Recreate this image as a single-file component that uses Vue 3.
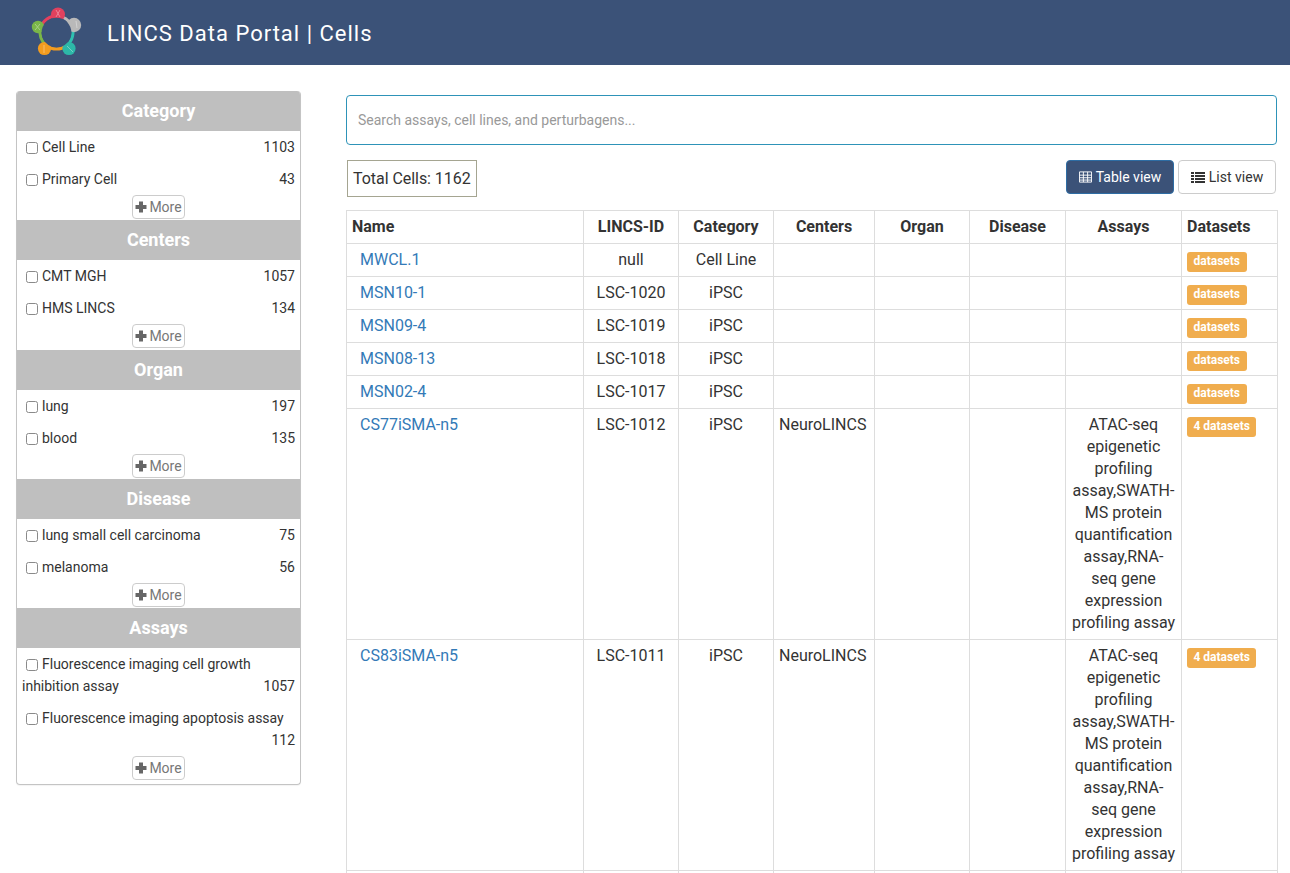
<template>
  <div class="page">
    <header class="topbar">
      <svg class="logo" viewBox="0 0 60 60" width="60" height="60">
        <g fill="none" stroke-width="3">
          <path d="M30.6 13 A16.5 16.5 0 0 1 44.3 22.3" stroke="#b9b9b9" />
          <path d="M44.3 22.3 A16.5 16.5 0 0 1 39.4 42.7" stroke="#2fbfb0" />
          <path d="M39.4 42.7 A16.5 16.5 0 0 1 19.6 42.7" stroke="#f39c1f" />
          <path d="M19.6 42.7 A16.5 16.5 0 0 1 13.6 25" stroke="#7ab648" />
          <path d="M13.6 25 A16.5 16.5 0 0 1 30.6 13" stroke="#e5405e" />
        </g>
        <circle cx="31" cy="11.5" r="7" fill="#e0415e" />
        <circle cx="47" cy="22" r="7.2" fill="#b9b9b9" />
        <circle cx="42" cy="45.5" r="6.6" fill="#2db8a8" />
        <circle cx="17.5" cy="45.5" r="6.6" fill="#f39c1f" />
        <circle cx="11" cy="24" r="6.2" fill="#7ab648" />
        <circle cx="29.5" cy="29.5" r="14.8" fill="#3b5278" />
        <g stroke="#fff" stroke-width="1" opacity="0.35" fill="none">
          <path d="M29 7 L33 14 M33 7 L29 14" />
          <path d="M49 18 L50 25" />
          <path d="M40 43 L46 49" />
          <path d="M17 42 V50" />
          <path d="M8 21 L13 27 M13 21 L8 27" />
        </g>
      </svg>
      <h1 class="title">LINCS Data Portal | Cells</h1>
    </header>

    <div class="content">
      <aside class="sidebar">
        <section v-for="facet in facets" :key="facet.name" class="facet">
          <h2 class="facet-title">{{ facet.name }}</h2>
          <div class="facet-body">
            <div v-for="item in facet.items" :key="item.label" class="facet-item">
              <span class="check"></span>{{ item.label }}
              <span class="count">{{ item.count }}</span>
            </div>
            <div class="more-wrap">
              <button class="more">
                <svg viewBox="0 0 12 12" width="12" height="12"><path d="M4 0.5h4V4h3.5v4H8v3.5H4V8H0.5V4H4z" fill="#666" /></svg>More
              </button>
            </div>
          </div>
        </section>
      </aside>

      <main class="main">
        <input class="search" placeholder="Search assays, cell lines, and perturbagens..." />
        <div class="toolbar">
          <div class="total">Total Cells: 1162</div>
          <div class="views">
            <button class="view active">
              <svg viewBox="0 0 14 12" width="13" height="12"><path d="M0.5 0.5h13v11h-13zM0.5 4h13M0.5 6.8h13M0.5 9.3h13M4.7 0.5v11M9.3 0.5v11" fill="none" stroke="currentColor" /></svg>
              Table view
            </button>
            <button class="view list">
              <svg viewBox="0 0 14 12" width="14" height="12"><path d="M0 1h3v2H0zM4 1h10v2H4zM0 4h3v2H0zM4 4h10v2H4zM0 7h3v2H0zM4 7h10v2H4zM0 10h3v2H0zM4 10h10v2H4z" fill="currentColor" /></svg>
              List view
            </button>
          </div>
        </div>

        <table class="cells">
          <colgroup>
            <col v-for="w in colWidths" :key="w.id" :style="{ width: w.px + 'px' }" />
          </colgroup>
          <thead>
            <tr>
              <th class="left">Name</th>
              <th>LINCS-ID</th>
              <th>Category</th>
              <th>Centers</th>
              <th>Organ</th>
              <th>Disease</th>
              <th>Assays</th>
              <th class="left">Datasets</th>
            </tr>
          </thead>
          <tbody>
            <tr v-for="row in rows" :key="row.name">
              <td class="name"><a href="#">{{ row.name }}</a></td>
              <td>{{ row.id }}</td>
              <td>{{ row.category }}</td>
              <td class="left">{{ row.centers }}</td>
              <td></td>
              <td></td>
              <td>{{ row.assays }}</td>
              <td class="left"><span class="badge">{{ row.datasets }}</span></td>
            </tr>
            <tr class="filler">
              <td v-for="w in colWidths" :key="w.id"></td>
            </tr>
          </tbody>
        </table>
      </main>
    </div>
  </div>
</template>

<script setup>
const facets = [
  { name: 'Category', items: [{ label: 'Cell Line', count: 1103 }, { label: 'Primary Cell', count: 43 }] },
  { name: 'Centers', items: [{ label: 'CMT MGH', count: 1057 }, { label: 'HMS LINCS', count: 134 }] },
  { name: 'Organ', items: [{ label: 'lung', count: 197 }, { label: 'blood', count: 135 }] },
  { name: 'Disease', items: [{ label: 'lung small cell carcinoma', count: 75 }, { label: 'melanoma', count: 56 }] },
  {
    name: 'Assays',
    items: [
      { label: 'Fluorescence imaging cell growth inhibition assay', count: 1057 },
      { label: 'Fluorescence imaging apoptosis assay', count: 112 }
    ]
  }
]

const colWidths = [237, 95, 95, 101, 95, 96, 116, 96].map((px, id) => ({ id, px }))

const assays = 'ATAC-seq epigenetic profiling assay,SWATH-MS protein quantification assay,RNA-seq gene expression profiling assay'

const rows = [
  { name: 'MWCL.1', id: 'null', category: 'Cell Line', centers: '', assays: '', datasets: 'datasets' },
  { name: 'MSN10-1', id: 'LSC-1020', category: 'iPSC', centers: '', assays: '', datasets: 'datasets' },
  { name: 'MSN09-4', id: 'LSC-1019', category: 'iPSC', centers: '', assays: '', datasets: 'datasets' },
  { name: 'MSN08-13', id: 'LSC-1018', category: 'iPSC', centers: '', assays: '', datasets: 'datasets' },
  { name: 'MSN02-4', id: 'LSC-1017', category: 'iPSC', centers: '', assays: '', datasets: 'datasets' },
  { name: 'CS77iSMA-n5', id: 'LSC-1012', category: 'iPSC', centers: 'NeuroLINCS', assays, datasets: '4 datasets' },
  { name: 'CS83iSMA-n5', id: 'LSC-1011', category: 'iPSC', centers: 'NeuroLINCS', assays, datasets: '4 datasets' }
]
</script>

<style>
html, body {
  margin: 0;
  overflow: hidden;
}
</style>

<style scoped>
.page {
  height: 873px;
  overflow: hidden;
  background: #fff;
  font-family: Roboto, "Liberation Sans", sans-serif;
  font-size: 14px;
  line-height: 22px;
  color: #333;
}

.topbar {
  height: 65px;
  background: #3b5278;
  display: flex;
  align-items: center;
  padding-left: 27px;
  box-sizing: border-box;
}

.logo {
  margin-top: 1px;
  flex: none;
}

.title {
  margin: 3px 0 0 20px;
  font-size: 22px;
  font-weight: 400;
  letter-spacing: 1px;
  color: #fff;
}

.content {
  display: flex;
  align-items: flex-start;
  padding: 26px 12px 0 16px;
}

.sidebar {
  width: 285px;
  flex: none;
  box-sizing: border-box;
  border: 1px solid #c4c4c4;
  border-top: 0;
  border-radius: 4px;
  overflow: hidden;
  box-shadow: 0 1px 1px rgba(0, 0, 0, 0.05);
}

.facet-title {
  margin: 0;
  height: 40px;
  line-height: 40px;
  background: #bfbfbf;
  color: #fff;
  font-size: 18px;
  font-weight: 700;
  text-align: center;
}

.facet-body {
  padding: 5px 5px 0 5px;
  height: 89.25px;
  box-sizing: border-box;
}

.facet:last-child .facet-body {
  height: auto;
  padding-bottom: 4px;
}

.facet-item {
  display: flow-root;
  padding: 0 0 10px 0;
  color: #333;
  font-size: 14px;
}

.check {
  display: inline-block;
  width: 10px;
  height: 10px;
  margin: 0 4px 0 4px;
  border: 1px solid #8a8a8a;
  border-radius: 2.5px;
  vertical-align: -2px;
}

.count {
  float: right;
}

.more-wrap {
  margin-top: -5px;
  text-align: center;
}

.more {
  display: inline-flex;
  align-items: center;
  justify-content: center;
  gap: 2px;
  width: 53px;
  height: 24px;
  padding: 0;
  background: #fff;
  border: 1px solid #ccc;
  border-radius: 4px;
  color: #777;
  font: 14px Roboto, "Liberation Sans", sans-serif;
}

.main {
  margin-left: 45px;
  width: 931px;
  flex: none;
}

.search {
  display: block;
  width: 931px;
  height: 50px;
  margin-top: 4px;
  box-sizing: border-box;
  padding: 0 11px;
  border: 1px solid #2e93b8;
  border-radius: 4px;
  outline: none;
  font: 14px Roboto, "Liberation Sans", sans-serif;
}

.search::placeholder {
  color: #999;
}

.toolbar {
  display: flex;
  justify-content: space-between;
  align-items: flex-start;
  margin-top: 15px;
  padding: 0 1px 0 1px;
  height: 50px;
}

.total {
  box-sizing: border-box;
  height: 37px;
  padding: 0 5px;
  line-height: 35px;
  font-size: 16px;
  letter-spacing: -0.05px;
  border: 1px solid #a5a591;
  color: #333;
}

.views {
  display: flex;
  gap: 4px;
}

.view {
  display: inline-flex;
  align-items: center;
  justify-content: center;
  gap: 4px;
  width: 108px;
  height: 34px;
  box-sizing: border-box;
  padding: 0;
  background: #fff;
  border: 1px solid #ccc;
  border-radius: 4px;
  color: #333;
  font: 14px Roboto, "Liberation Sans", sans-serif;
}

.view.list {
  width: 98px;
}

.view.active {
  background: #3b5278;
  border-color: #2e6da4;
  color: #fff;
}

.cells {
  table-layout: fixed;
  width: 931px;
  border-collapse: collapse;
  font-size: 16px;
}

.cells th,
.cells td {
  padding: 5px;
  border: 1px solid #ddd;
  text-align: center;
  vertical-align: top;
  line-height: 22px;
}

.cells th {
  font-weight: 700;
}

.cells .left {
  text-align: left;
}

.cells .name {
  text-align: left;
  padding-left: 13px;
}

.cells a {
  color: #337ab7;
  text-decoration: none;
}

.filler td {
  height: 22px;
}

.badge {
  display: inline-block;
  padding: 0 6.5px;
  height: 20px;
  line-height: 18px;
  background: #f0ad4e;
  border-radius: 3px;
  color: #fff;
  font-size: 12px;
  font-weight: 700;
  vertical-align: top;
  margin-top: 3px;
  margin-bottom: -1px;
}
</style>
